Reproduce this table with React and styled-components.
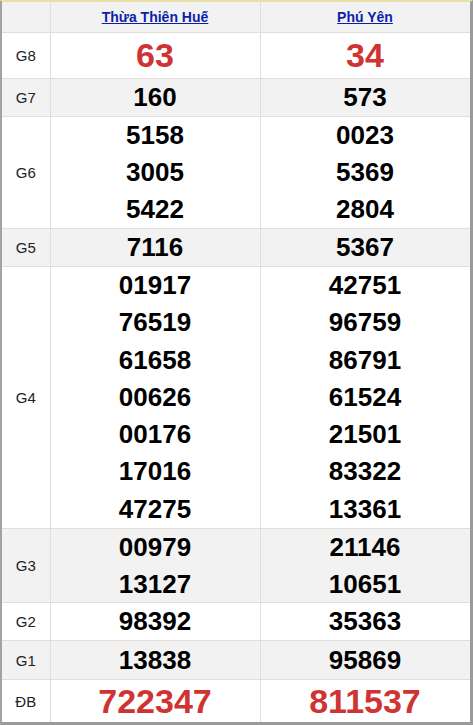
import React from "react";
import styled, { createGlobalStyle } from "styled-components";

const GlobalStyle = createGlobalStyle`
  html, body {
    margin: 0;
    padding: 0;
    background: #ffffff;
    font-family: "Liberation Sans", Arial, sans-serif;
  }
`;

const rows = [
  { label: "G8", a: ["63"], b: ["34"], size: "big", shade: false },
  { label: "G7", a: ["160"], b: ["573"], shade: true },
  { label: "G6", a: ["5158", "3005", "5422"], b: ["0023", "5369", "2804"], shade: false },
  { label: "G5", a: ["7116"], b: ["5367"], shade: true },
  {
    label: "G4",
    a: ["01917", "76519", "61658", "00626", "00176", "17016", "47275"],
    b: ["42751", "96759", "86791", "61524", "21501", "83322", "13361"],
    shade: false,
    lh: 37.3,
  },
  { label: "G3", a: ["00979", "13127"], b: ["21146", "10651"], shade: true, lh: 36.5 },
  { label: "G2", a: ["98392"], b: ["35363"], shade: false },
  { label: "G1", a: ["13838"], b: ["95869"], shade: true, lh: 38 },
  { label: "ĐB", a: ["722347"], b: ["811537"], size: "big", shade: false, lh: 42 },
];

export default function App() {
  return (
    <>
      <GlobalStyle />
      <Frame>
        <Table>
          <colgroup>
            <col style={{ width: 48 }} />
            <col style={{ width: 210 }} />
            <col style={{ width: 210 }} />
          </colgroup>
          <thead>
            <tr>
              <HeadCell />
              <HeadCell>
                <ProvinceLink href="#">Thừa Thiên Huế</ProvinceLink>
              </HeadCell>
              <HeadCell>
                <ProvinceLink href="#">Phú Yên</ProvinceLink>
              </HeadCell>
            </tr>
          </thead>
          <tbody>
            {rows.map((r) => (
              <Row key={r.label} $shade={r.shade}>
                <Label>{r.label}</Label>
                {[r.a, r.b].map((list, i) => (
                  <NumCell key={i}>
                    {list.map((n) => (
                      <Num key={n} $big={r.size === "big"} $lh={r.lh}>
                        {n}
                      </Num>
                    ))}
                  </NumCell>
                ))}
              </Row>
            ))}
          </tbody>
        </Table>
      </Frame>
    </>
  );
}

const Frame = styled.div`
  width: 473px;
  height: 725px;
  box-sizing: border-box;
  border-left: 2px solid #a3a3a3;
  border-top: 2px solid #e9dfa8;
  border-right: 3px solid #9a9a9a;
  border-bottom: 3px solid #9a9a9a;
  background: #ffffff;
  overflow: hidden;
`;

const Table = styled.table`
  width: 468px;
  border-collapse: collapse;
  table-layout: fixed;
  background: #ffffff;
`;

const HeadCell = styled.th`
  height: 30px;
  padding: 0;
  background: #f2f2f2;
  border: 1px solid #e2ddd8;
  border-top: none;
  text-align: center;
  vertical-align: middle;
  &:first-child {
    border-left: none;
  }
`;

const ProvinceLink = styled.a`
  color: #0d1fa8;
  font-size: 14px;
  font-weight: bold;
  text-decoration: underline;
`;

const Row = styled.tr`
  background: ${(p) => (p.$shade ? "#f2f2f2" : "#ffffff")};
`;

const Label = styled.td`
  padding: 0;
  border: 1px solid #e2ddd8;
  border-left: none;
  text-align: center;
  vertical-align: middle;
  font-size: 15px;
  color: #222222;
`;

const NumCell = styled.td`
  padding: 0;
  border: 1px solid #e2ddd8;
  text-align: center;
  vertical-align: middle;
`;

const Num = styled.div`
  font-weight: bold;
  font-size: ${(p) => (p.$big ? "34px" : "26px")};
  line-height: ${(p) => (p.$lh ? `${p.$lh}px` : p.$big ? "45px" : "37px")};
  color: ${(p) => (p.$big ? "#cf3333" : "#000000")};
`;
